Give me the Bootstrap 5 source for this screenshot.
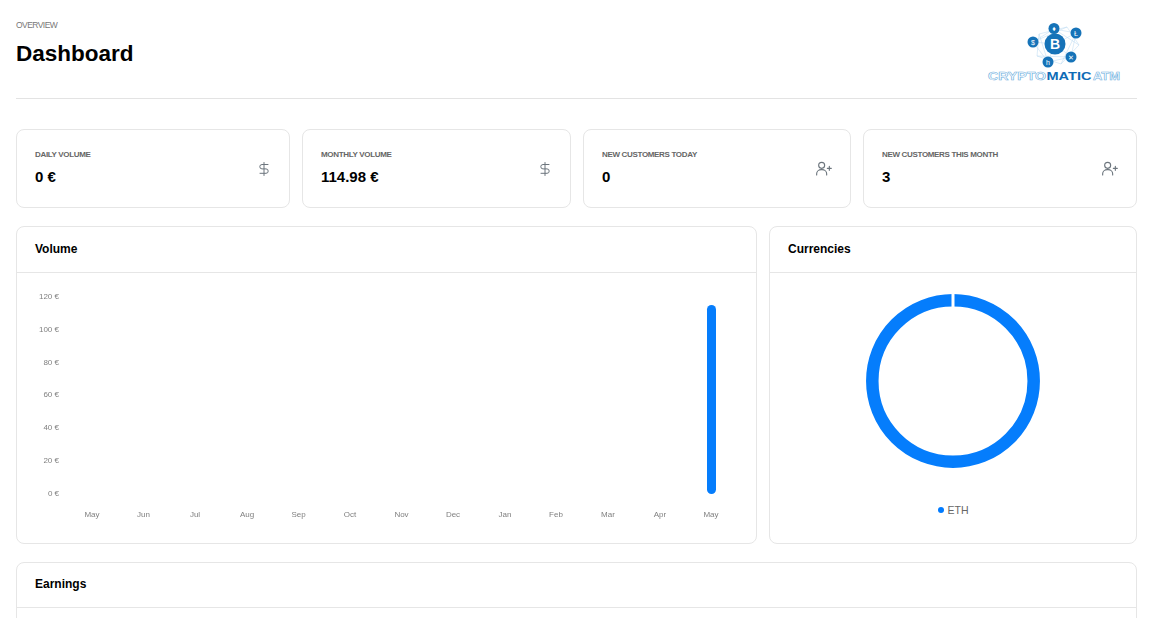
<!DOCTYPE html>
<html lang="en">
<head>
    <meta charset="UTF-8">
    <meta name="viewport" content="width=device-width, initial-scale=1.0">
    <title>Dashboard</title>
    <link href="https://cdn.jsdelivr.net/npm/bootstrap@5.3.0/dist/css/bootstrap.min.css" rel="stylesheet">
    <style>
        html, body {
            height: 100%;
            overflow: hidden;
        }
        body {
            font-family: "Liberation Sans", Arial, sans-serif;
            color: #000;
            background: #fff;
        }
        .page-wrap {
            padding: 20px 22px 0 16px;
        }
        .page-head {
            height: 79px;
            border-bottom: 1px solid #e3e3e3;
            margin-bottom: 30px;
        }
        .page-sub {
            font-size: 8.5px;
            line-height: 10px;
            color: #777;
            letter-spacing: -0.55px;
        }
        .page-title {
            font-size: 22.5px;
            line-height: 28px;
            font-weight: 700;
            margin: 10px 0 0;
        }
        .logo-box {
            width: 150px;
            height: 70px;
        }
        .stat-row {
            display: grid;
            grid-template-columns: 274fr 269fr 268fr 274fr;
            gap: 12px;
            margin-bottom: 18px;
        }
        .chart-row {
            display: grid;
            grid-template-columns: 741px 1fr;
            gap: 12px;
            margin-bottom: 18px;
        }
        .panel {
            border: 1px solid #e6e6e6;
            border-radius: 8px;
            background: #fff;
        }
        .stat-panel {
            height: 79px;
            padding: 20px 18px 0;
        }
        .stat-label {
            font-size: 8px;
            line-height: 10px;
            font-weight: 700;
            color: #666;
            text-transform: uppercase;
            letter-spacing: -0.33px;
        }
        .stat-value {
            font-size: 15px;
            line-height: 18px;
            font-weight: 700;
            margin-top: 8px;
        }
        .stat-icon {
            color: #6c757d;
            margin-top: 11px;
        }
        .icon-dollar {
            margin-top: 12px;
            margin-right: 2px;
        }
        .panel-head {
            height: 46px;
            padding: 0 18px;
            font-size: 12px;
            font-weight: 700;
            line-height: 45px;
            border-bottom: 1px solid #e6e6e6;
        }
        .panel-chart {
            height: 270px;
        }
        .earn-head {
            height: 45px;
            line-height: 43px;
        }
        .earn-body {
            height: 200px;
        }
        /* own layer so the axis text gets grey antialiasing like a canvas chart */
        .chart-svg {
            will-change: transform;
        }
        .axis-text {
            font-family: "Liberation Sans", Arial, sans-serif;
            font-size: 8px;
            fill: #808080;
        }
        .legend-text {
            font-size: 10.5px;
            color: #666;
        }
        .legend-dot {
            width: 6px;
            height: 6px;
            border-radius: 50%;
            background: #007bff;
        }
        .donut-box {
            padding-top: 20px;
        }
        .legend-row {
            margin-top: 34px;
            line-height: 14px;
        }
    </style>
</head>
<body>
    <div class="page-wrap">
        <div class="page-head d-flex justify-content-between">
            <div>
                <div class="page-sub">OVERVIEW</div>
                <h1 class="page-title">Dashboard</h1>
            </div>
            <!-- logo -->
            <svg class="logo-box" viewBox="0 0 150 70">
                <g stroke="#b9d8f0" stroke-width="0.5" fill="none">
                    <path d="M46 22L67 9L89 13L84 37L61 42Z"/>
                    <path d="M46 22L68 24L67 9M68 24L89 13M68 24L84 37M68 24L61 42"/>
                    <path d="M52 14L80 7L92 25L74 44L50 36Z"/>
                    <path d="M46 22L80 7M67 9L92 25M89 13L74 44M84 37L50 36M61 42L52 14"/>
                </g>
                <g fill="#1673b8">
                    <circle cx="68" cy="24" r="10.500"/>
                    <circle cx="46" cy="22" r="5.500"/>
                    <circle cx="67" cy="8.500" r="5.500"/>
                    <circle cx="89" cy="13" r="5.500"/>
                    <circle cx="84" cy="37" r="5.500"/>
                    <circle cx="61" cy="42" r="5.500"/>
                </g>
                <text x="68" y="29" text-anchor="middle" font-family="Liberation Sans" font-weight="700" font-size="14" fill="#fff">B</text>
                <g fill="#fff" font-family="Liberation Sans" font-size="7" text-anchor="middle">
                    <text x="46" y="24.500">$</text>
                    <text x="67" y="11">♦</text>
                    <text x="89" y="15.500">Ł</text>
                    <text x="84" y="39.500">✕</text>
                    <text x="61" y="44.500">h</text>
                </g>
                <text y="60" font-family="Liberation Sans" font-weight="700" font-size="10">
                    <tspan x="1" textLength="58" lengthAdjust="spacingAndGlyphs" fill="#fff" stroke="#6fb0e0" stroke-width="0.5">CRYPTO</tspan>
                    <tspan x="59.500" textLength="45" lengthAdjust="spacingAndGlyphs" fill="#0f6cb6">MATIC</tspan>
                    <tspan x="106" textLength="27" lengthAdjust="spacingAndGlyphs" fill="#fff" stroke="#6fb0e0" stroke-width="0.5">ATM</tspan>
                </text>
            </svg>
        </div>

        <div class="stat-row">
            <div class="panel stat-panel d-flex justify-content-between">
                <div>
                    <div class="stat-label">Daily Volume</div>
                    <div class="stat-value">0 €</div>
                </div>
                <svg class="stat-icon icon-dollar" width="10" height="14" viewBox="0 0 10 14" fill="none" stroke="currentColor" stroke-width="1" stroke-linecap="round" stroke-linejoin="round"><path d="M5 .5v13"/><path d="M9 2.500H3a2.200 2.200 0 0 0 0 4.400h4a2.200 2.200 0 0 1 0 4.400H1"/></svg>
            </div>
            <div class="panel stat-panel d-flex justify-content-between">
                <div>
                    <div class="stat-label">Monthly Volume</div>
                    <div class="stat-value">114.98 €</div>
                </div>
                <svg class="stat-icon icon-dollar" width="10" height="14" viewBox="0 0 10 14" fill="none" stroke="currentColor" stroke-width="1" stroke-linecap="round" stroke-linejoin="round"><path d="M5 .5v13"/><path d="M9 2.500H3a2.200 2.200 0 0 0 0 4.400h4a2.200 2.200 0 0 1 0 4.400H1"/></svg>
            </div>
            <div class="panel stat-panel d-flex justify-content-between">
                <div>
                    <div class="stat-label">New Customers Today</div>
                    <div class="stat-value">0</div>
                </div>
                <svg class="stat-icon" width="16" height="16" viewBox="0 0 24 24" fill="none" stroke="currentColor" stroke-width="1.700" stroke-linecap="round" stroke-linejoin="round"><path d="M1 21v-2a7 6 0 0 1 7-6h1a7 6 0 0 1 7 6v2"/><circle cx="8.500" cy="6.500" r="4.500"/><path d="M20 8v6M17 11h6"/></svg>
            </div>
            <div class="panel stat-panel d-flex justify-content-between">
                <div>
                    <div class="stat-label">New Customers This Month</div>
                    <div class="stat-value">3</div>
                </div>
                <svg class="stat-icon" width="16" height="16" viewBox="0 0 24 24" fill="none" stroke="currentColor" stroke-width="1.700" stroke-linecap="round" stroke-linejoin="round"><path d="M1 21v-2a7 6 0 0 1 7-6h1a7 6 0 0 1 7 6v2"/><circle cx="8.500" cy="6.500" r="4.500"/><path d="M20 8v6M17 11h6"/></svg>
            </div>
        </div>

        <div class="chart-row">
            <div class="panel">
                <div class="panel-head">Volume</div>
                <div class="panel-chart">
                    <svg width="739" height="270" viewBox="0 0 739 270" class="d-block chart-svg">
                        <g class="axis-text" text-anchor="end">
                            <text x="42" y="26">120 €</text>
                            <text x="42" y="59">100 €</text>
                            <text x="42" y="92">80 €</text>
                            <text x="42" y="124">60 €</text>
                            <text x="42" y="157">40 €</text>
                            <text x="42" y="190">20 €</text>
                            <text x="42" y="223">0 €</text>
                        </g>
                        <g class="axis-text" text-anchor="middle">
                            <text x="75" y="244">May</text>
                            <text x="126.500" y="244">Jun</text>
                            <text x="178" y="244">Jul</text>
                            <text x="230" y="244">Aug</text>
                            <text x="281.500" y="244">Sep</text>
                            <text x="333" y="244">Oct</text>
                            <text x="384.500" y="244">Nov</text>
                            <text x="436" y="244">Dec</text>
                            <text x="488" y="244">Jan</text>
                            <text x="539" y="244">Feb</text>
                            <text x="591" y="244">Mar</text>
                            <text x="643" y="244">Apr</text>
                            <text x="694" y="244">May</text>
                        </g>
                        <rect x="690" y="32" width="9" height="189" rx="4.500" fill="#057dfc"/>
                    </svg>
                </div>
            </div>
            <div class="panel">
                <div class="panel-head">Currencies</div>
                <div class="panel-chart donut-box">
                    <svg width="176" height="176" viewBox="0 0 176 176" class="d-block mx-auto">
                        <circle cx="88" cy="88" r="80.700" fill="none" stroke="#057dfc" stroke-width="12.500"/>
                        <rect x="86.500" y="0" width="3" height="16" fill="#fff"/>
                    </svg>
                    <div class="legend-row d-flex justify-content-center align-items-center gap-1">
                        <span class="legend-dot"></span>
                        <span class="legend-text">ETH</span>
                    </div>
                </div>
            </div>
        </div>

        <div class="panel">
            <div class="panel-head earn-head">Earnings</div>
            <div class="earn-body"></div>
        </div>
    </div>
</body>
</html>
